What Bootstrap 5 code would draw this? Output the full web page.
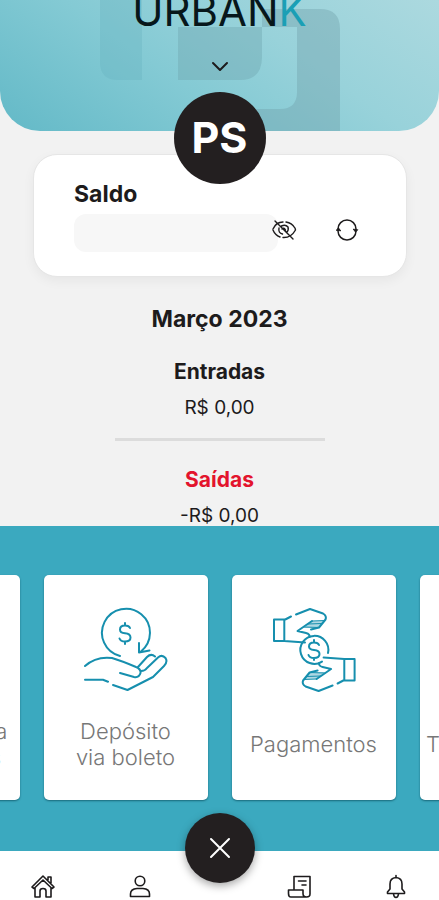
<!DOCTYPE html>
<html lang="pt-BR">
<head>
<meta charset="utf-8">
<meta name="viewport" content="width=device-width, initial-scale=1">
<title>Urbank</title>
<link href="https://cdn.jsdelivr.net/npm/bootstrap@5.3.0/dist/css/bootstrap.min.css" rel="stylesheet">
<style>
  body { background: #f2f2f2; color: #1d1b1c; font-family: Inter, "Open Sans", sans-serif; }
  svg { display: block; fill: none; stroke: currentColor; stroke-linecap: round; stroke-linejoin: round; }
  .top-panel { height: 131px; border-radius: 0 0 40px 40px; background: linear-gradient(35deg, #63b9c7 0%, #84cad4 40%, #98d2da 65%, #acd9df 100%); }
  .top-art { position: absolute; inset: 0; margin: 0 auto; stroke: none; }
  .wordmark { font-size: 42px; line-height: 40px; margin-top: -9px; margin-bottom: 25px; color: #07171b; }
  .wordmark b { font-weight: 400; color: #1b9fb5; }
  .initials { width: 92px; height: 92px; margin-top: -39px; background: #231f20; font-size: 43px; line-height: 42px; font-weight: 700; z-index: 2; padding-bottom: 3px; }
  .balance { margin: -30px 32px 0 33px; padding: 25px 47px 24px 40px; border: 1px solid #e6e6e6; border-radius: 24px; box-shadow: 0 4px 12px rgba(0,0,0,.05); }
  .title-lg { font-size: 23px; line-height: 28px; font-weight: 700; margin: 0; }
  .title-md { font-size: 21px; line-height: 24px; font-weight: 700; margin: 27px 0 12px; }
  .amount { font-size: 19px; line-height: 24px; margin: 0; }
  .masked { height: 38px; margin-top: 6px; border-radius: 12px; background: #f7f7f7; }
  .bare { border: 0; padding: 0; background: none; color: #1d1b1c; }
  .tool-icon { margin-top: 10px; }
  .eye { margin-left: -7px; margin-right: 38px; }
  .month { padding-top: 28px; }
  .divider { width: 210px; height: 3px; margin: 18px 0 0; border: 0; background: #dcdcdc; opacity: 1; }
  .out { color: #e3142d; }
  .actions { background: #3ba9bf; padding: 49px 0 51px; margin-top: -3px; z-index: 1; }
  .tile { width: 164px; height: 225px; border-radius: 5px; background: #fff; color: #777; text-decoration: none; box-shadow: 0 1px 2px rgba(0,60,75,.6); font-size: 22px; line-height: 26px; font-weight: 300; padding-top: 32px; }
  .tile svg { color: #168fae; stroke-width: 2; }
  .tile-label { height: 78px; margin-top: 12px; }
  .tabs { height: 49px; padding: 21px 29px 0; }
  .tab-gap { gap: 69px; }
  .close-round { position: absolute; left: 50%; top: -38px; margin-left: -35px; width: 70px; height: 70px; border: 0; background: #231f20; color: #fff; box-shadow: 0 3px 8px rgba(0,0,0,.35); z-index: 3; }
</style>
<script src="https://cdn.jsdelivr.net/npm/bootstrap@5.3.0/dist/js/bootstrap.bundle.min.js"></script>
</head>
<body>
<div class="d-flex flex-column min-vh-100 overflow-hidden">
  <header class="top-panel position-relative overflow-hidden d-flex flex-column align-items-center">
    <svg class="top-art" width="439" height="131" viewBox="0 0 439 131" aria-hidden="true">
      <path d="M100 0H142V80H118Q100 80 100 62Z" fill="#62aebc" fill-opacity=".3"/>
      <path d="M178 27H262V57Q262 80 240 80H178Z" fill="#6fa7b0" fill-opacity=".42"/>
      <path d="M262 9H320Q340 9 340 29V131H240V109H280Q297 109 297 92V27H262Z" fill="#709fa9" fill-opacity=".4"/>
    </svg>
    <div class="wordmark position-relative">URBAN<b>K</b></div>
    <button class="bare position-relative" type="button" aria-label="Expandir"><svg width="20" height="20" viewBox="0 0 20 20" stroke-width="2"><path d="M3 7l7 7 7-7"/></svg></button>
  </header>

  <main class="flex-grow-1 d-flex flex-column">
    <div class="initials position-relative rounded-circle text-white align-self-center d-flex align-items-center justify-content-center flex-shrink-0">PS</div>
    <section class="balance bg-white">
      <h1 class="title-lg">Saldo</h1>
      <div class="d-flex align-items-start">
        <div class="masked flex-grow-1"></div>
        <button class="bare tool-icon eye" type="button" aria-label="Mostrar saldo">
          <svg width="26" height="24" viewBox="0 0 26 24" stroke-width="1.4"><path d="M2 11Q5 4 12 4M15 4Q21 5 23.500 9.500M2 12Q4 17 9 19M24 10L24.500 12Q20 20 12 19.500M8 10Q7 15 11.500 16M10.500 8Q14.500 6 17 9Q18 12.500 15.500 14.500M11 11Q13 9 14.500 12M4 3L22 21"/></svg>
        </button>
        <button class="bare tool-icon" type="button" aria-label="Atualizar">
          <svg width="24" height="24" viewBox="0 0 24 24" stroke-width="1.5"><path d="M3 11A9 9 0 0 1 21 11M21 13A9 9 0 0 1 3 13"/><path d="M1.500 12L3.500 10L5.500 12.500ZM18.500 11.500L20.500 14L22.500 12Z" fill="currentColor" stroke-width="1"/></svg>
        </button>
      </div>
    </section>
    <section class="month text-center d-flex flex-column align-items-center">
      <h2 class="title-lg">Março 2023</h2>
      <h3 class="title-md">Entradas</h3>
      <p class="amount">R$ 0,00</p>
      <hr class="divider">
      <h3 class="title-md out">Saídas</h3>
      <p class="amount">-R$ 0,00</p>
    </section>
  </main>

  <section class="actions position-relative">
    <div class="d-flex justify-content-center gap-4">
      <a href="#" class="tile flex-shrink-0 d-flex flex-column align-items-center">
        <svg width="84" height="86" viewBox="0 0 84 86" aria-hidden="true"><rect x="12" y="10" width="60" height="60" rx="6"/></svg>
        <span class="tile-label d-flex align-items-center text-center">Transferência<br>entre contas</span>
      </a>
      <a href="#" class="tile flex-shrink-0 d-flex flex-column align-items-center">
        <svg width="84" height="86" viewBox="0 0 84 86" aria-hidden="true">
          <path d="M36 49A24 24 0 1 1 56.700 44.700M55 36V45.500L65.500 43.500"/>
          <path d="M46 21Q45 18.500 41 18.500Q36 18.500 36 22.500Q36 26 41 26.300Q46.500 26.800 46.500 30.500Q46.500 34.500 41 34.500Q36.500 34.500 35.500 31.500M41 16V18.500M41 34.500V37"/>
          <path d="M1 59Q12 49 28 51Q38 54 52 60Q57 62 56.500 66Q55 71 50 70L36 66"/>
          <path d="M54 60L63 50Q67 46 71 49.500M57 64Q61 64 63 61L74 50.500Q78 47 81.500 51Q84 55 80 59L69 70L43.500 83L29 78M1 72.700H19L24 74.700"/>
        </svg>
        <span class="tile-label d-flex align-items-center text-center">Depósito<br>via boleto</span>
      </a>
      <a href="#" class="tile flex-shrink-0 d-flex flex-column align-items-center">
        <svg width="84" height="86" viewBox="0 0 84 86" aria-hidden="true">
          <defs><g id="giving-hand">
            <path d="M2 12.500H12.300V34H2ZM12.300 13L19 9.500M24 7.500L38 2L51 6.500Q55 9 53.500 12.500L47 20.500L39 22.500M40 14L25.500 24L34 26Q38 27 37.500 30M12.300 34L33 35.500"/>
            <path d="M40 14L52.500 13.500M36 17L50 16.500M32 20L47 20.500" stroke-width="1.200"/>
            <path d="M40 14L52.500 14L47 20.500L32 21Z" fill="currentColor" fill-opacity=".35" stroke="none"/>
          </g></defs>
          <use href="#giving-hand"/><use href="#giving-hand" transform="rotate(180 42.300 43)"/>
          <path d="M50 54.600A14 14 0 1 1 56 46"/>
          <path d="M47 38Q46 35.500 42 35.500Q37 35.500 37 39.500Q37 42.500 42 43Q47.500 43.500 47.500 47Q47.500 51 42 51Q37.500 51 36.500 48M42 33V35.500M42 51V53"/>
        </svg>
        <span class="tile-label d-flex align-items-center text-center">Pagamentos</span>
      </a>
      <a href="#" class="tile flex-shrink-0 d-flex flex-column align-items-center">
        <svg width="84" height="86" viewBox="0 0 84 86" aria-hidden="true"><path d="M12 30H72L60 18M72 54H12L24 66"/></svg>
        <span class="tile-label d-flex align-items-center text-center">Transferências</span>
      </a>
    </div>
  </section>

  <nav class="tabs position-relative bg-white d-flex justify-content-between align-items-start" aria-label="Principal">
    <div class="d-flex tab-gap">
      <a href="#" class="bare" aria-label="Início"><svg width="28" height="28" viewBox="0 0 28 28" stroke-width="1.600"><path d="M3 15L14 4L25 15L23 16.500L14 8L5 16.500ZM6 16V25H11V19Q11 16.500 14 16.500Q17 16.500 17 19V25H22V16M19 8V5H22V11"/></svg></a>
      <a href="#" class="bare" aria-label="Perfil"><svg width="28" height="28" viewBox="0 0 28 28" stroke-width="1.600"><circle cx="14" cy="9" r="4.800"/><path d="M4.500 24.500V22Q4.500 17 11 16.500H17Q23.500 17 23.500 22V24.500Z"/></svg></a>
    </div>
    <button class="close-round rounded-circle d-flex align-items-center justify-content-center" type="button" aria-label="Fechar"><svg width="24" height="24" viewBox="0 0 24 24" stroke-width="2"><path d="M3 3L21 21M21 3L3 21"/></svg></button>
    <div class="d-flex tab-gap">
      <a href="#" class="bare" aria-label="Extrato"><svg width="28" height="28" viewBox="0 0 28 28" stroke-width="1.600"><path d="M9 17V4.500H25V22Q25 25 21.500 25H6Q3.500 25 3.500 21.500V18H18V21.500Q18 25 21.500 25M13.500 9H21M17 13H21"/></svg></a>
      <a href="#" class="bare" aria-label="Notificações"><svg width="28" height="28" viewBox="0 0 28 28" stroke-width="1.600"><path d="M5.500 21.500V20L8 17V12Q8 6 14 5.500Q20 6 20 12V17L22.500 20V21.500ZM14 5.500V3.500M11.500 22Q12 25.500 14 25.500Q16 25.500 16.500 22"/></svg></a>
    </div>
  </nav>
</div>
</body>
</html>
